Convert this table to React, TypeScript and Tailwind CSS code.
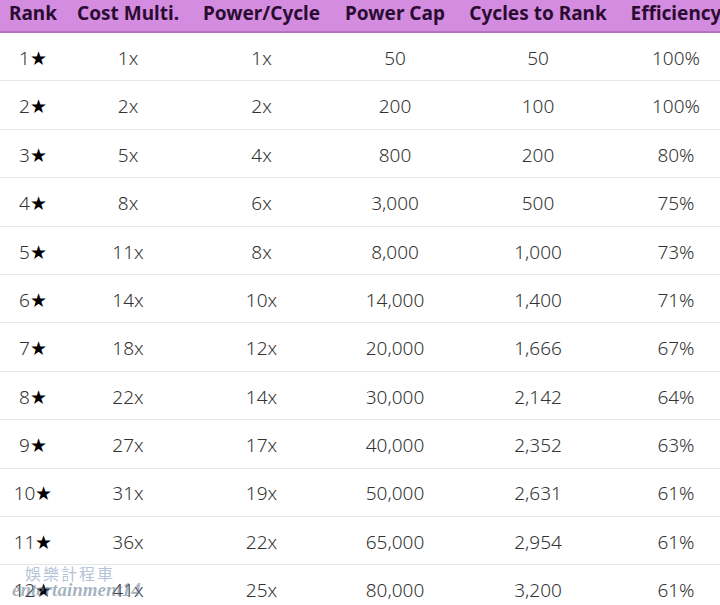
const headers = ["Rank", "Cost Multi.", "Power/Cycle", "Power Cap", "Cycles to Rank", "Efficiency"];

const rows: string[][] = [
  ["1★", "1x", "1x", "50", "50", "100%"],
  ["2★", "2x", "2x", "200", "100", "100%"],
  ["3★", "5x", "4x", "800", "200", "80%"],
  ["4★", "8x", "6x", "3,000", "500", "75%"],
  ["5★", "11x", "8x", "8,000", "1,000", "73%"],
  ["6★", "14x", "10x", "14,000", "1,400", "71%"],
  ["7★", "18x", "12x", "20,000", "1,666", "67%"],
  ["8★", "22x", "14x", "30,000", "2,142", "64%"],
  ["9★", "27x", "17x", "40,000", "2,352", "63%"],
  ["10★", "31x", "19x", "50,000", "2,631", "61%"],
  ["11★", "36x", "22x", "65,000", "2,954", "61%"],
  ["12★", "41x", "25x", "80,000", "3,200", "61%"],
];

const cols = "grid grid-cols-[66px_124px_143px_124px_162px_114px] w-[733px]";

export default function App() {
  return (
    <div className="relative w-[720px] h-[605px] overflow-hidden bg-white font-['Noto_Sans',sans-serif]">
      <div className={`${cols} h-[33px] bg-[#d48ce1] border-b-2 border-[#b574c2]`}>
        {headers.map((h) => (
          <div key={h} className="flex items-center justify-center text-[19px] font-bold text-[#2b0c31] leading-none pb-[4px] whitespace-nowrap">
            {h}
          </div>
        ))}
      </div>
      {rows.map((r) => (
        <div key={r[0]} className={`${cols} h-[48.4px] border-b border-[#e6e6e6]`}>
          {r.map((c, i) => (
            <div key={i} className="flex items-center justify-center pt-[3px] text-[19px] font-light text-[#333333] whitespace-nowrap">
              {i === 0 ? (
                <span>
                  {c.slice(0, -1)}
                  <span className="text-black font-normal">★</span>
                </span>
              ) : (
                c
              )}
            </div>
          ))}
        </div>
      ))}
      <div className="absolute left-[25px] top-[565px] text-[16px] tracking-[2px] text-[#9fb3cc]/80 font-['Noto_Sans_CJK_TC',sans-serif] leading-none">
        娛樂計程車
      </div>
      <div className="absolute left-[12px] top-[580px] text-[19px] italic font-bold text-[#6d7f98]/60 font-['Liberation_Serif',serif] leading-none">
        entertainment14
      </div>
    </div>
  );
}
